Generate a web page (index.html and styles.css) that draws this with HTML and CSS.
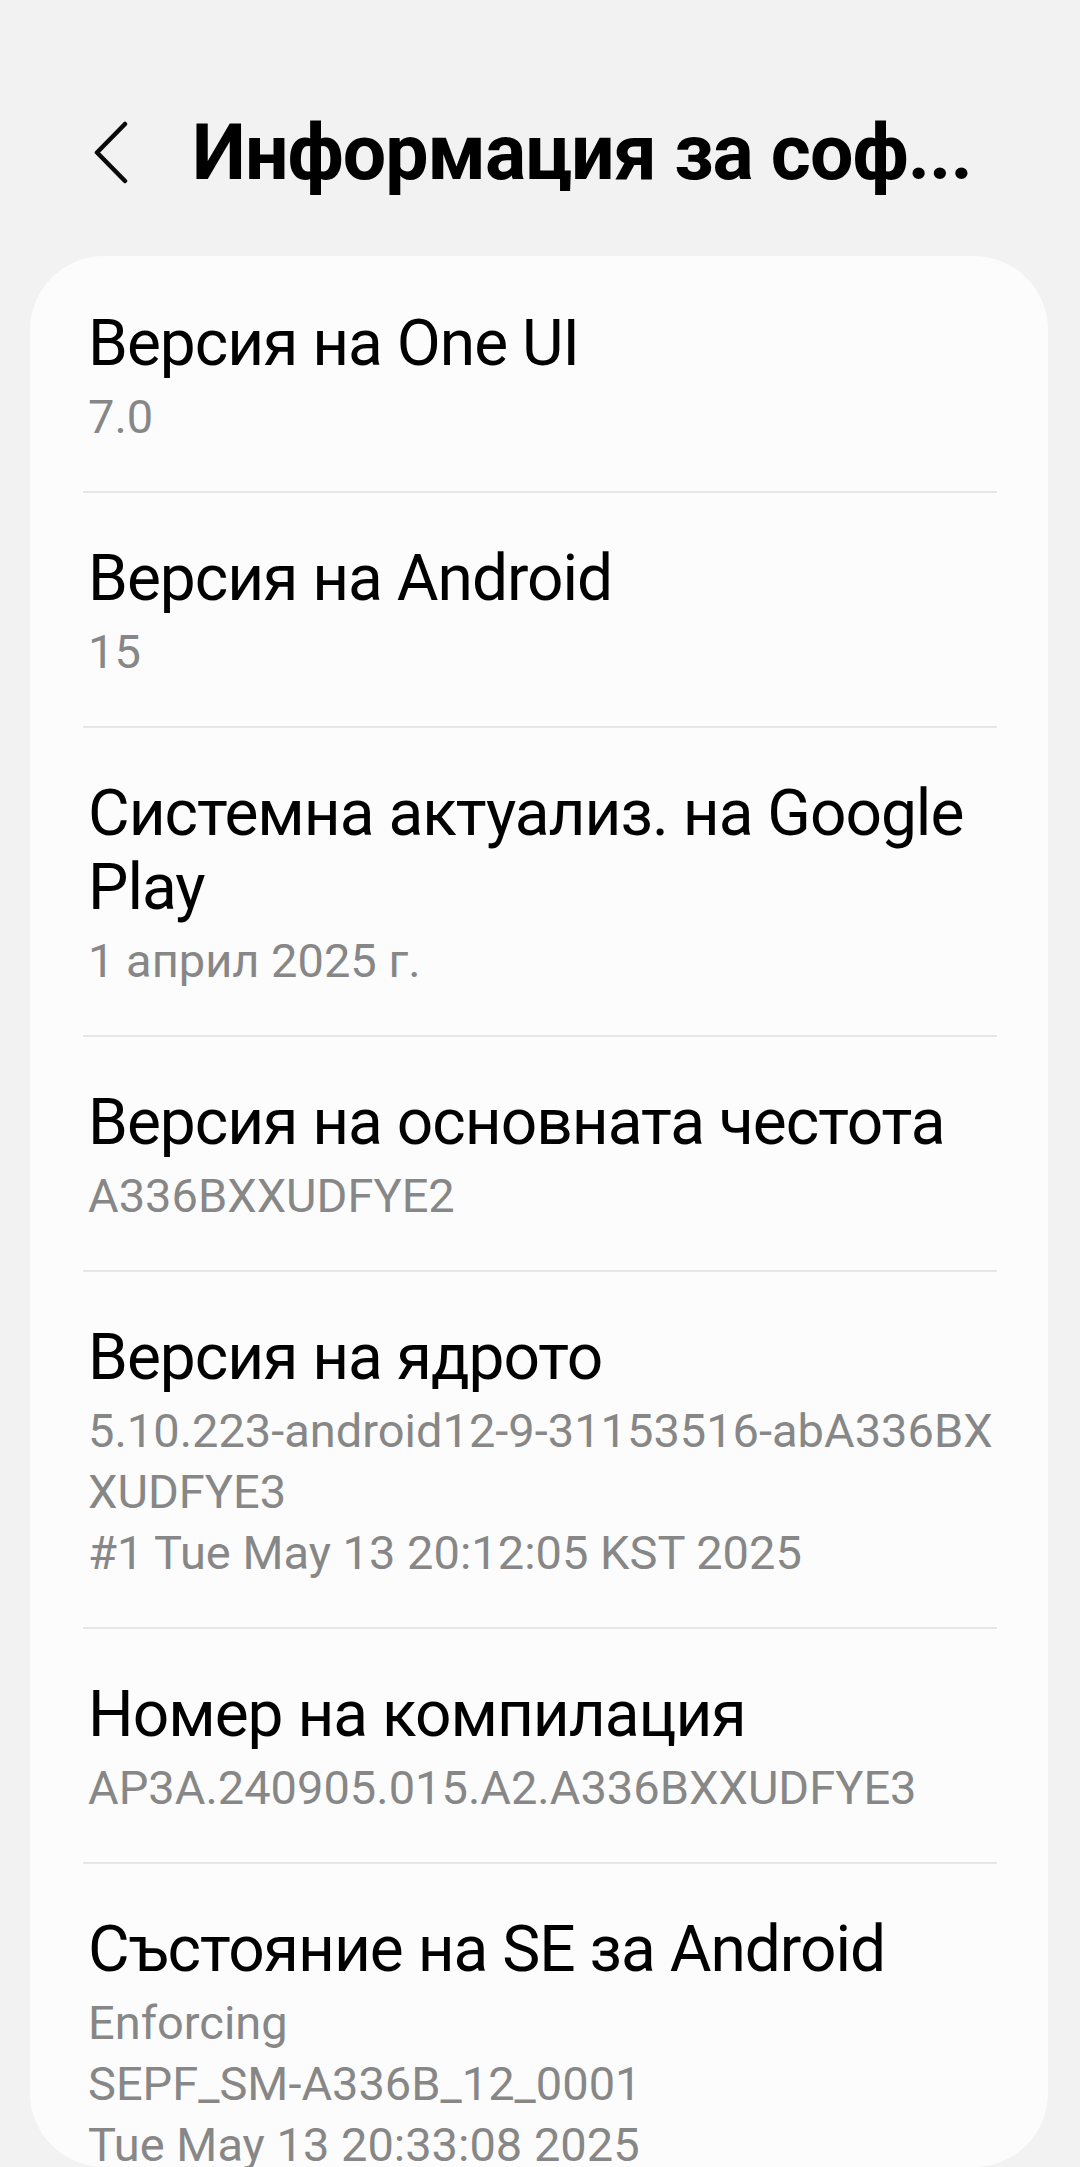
FILE: index.html
```html
<!DOCTYPE html>
<html lang="bg">
  <head>
    <meta charset="UTF-8" />
    <meta name="viewport" content="width=device-width, initial-scale=1.0" />
    <title>Информация за софтуера</title>
    <link rel="stylesheet" href="styles.css">
  </head>
  <body>
    <header class="app-bar">
      <button class="back" aria-label="Назад">
        <svg viewBox="0 0 40 64" width="40" height="64">
          <polyline points="33,3 5,31.5 33,60" fill="none" stroke="#0a0a0a" stroke-width="4.5" stroke-linecap="round" stroke-linejoin="round" />
        </svg>
      </button>
      <h1 class="app-title">Информация за соф...</h1>
    </header>

    <section class="card">
      <div class="info-item">
        <div class="label">Версия на One UI</div>
        <div class="value">7.0</div>
      </div>

      <div class="info-item">
        <div class="label">Версия на Android</div>
        <div class="value">15</div>
      </div>

      <div class="info-item">
        <div class="label">Системна актуализ. на Google Play</div>
        <div class="value">1 април 2025 г.</div>
      </div>

      <div class="info-item">
        <div class="label">Версия на основната честота</div>
        <div class="value">A336BXXUDFYE2</div>
      </div>

      <div class="info-item">
        <div class="label">Версия на ядрото</div>
        <div class="value">5.10.223-android12-9-31153516-abA336BX<br>XUDFYE3<br>#1 Tue May 13 20:12:05 KST 2025</div>
      </div>

      <div class="info-item">
        <div class="label">Номер на компилация</div>
        <div class="value">AP3A.240905.015.A2.A336BXXUDFYE3</div>
      </div>

      <div class="info-item">
        <div class="label">Състояние на SE за Android</div>
        <div class="value">Enforcing<br>SEPF_SM-A336B_12_0001<br>Tue May 13 20:33:08 2025</div>
      </div>
    </section>
  </body>
</html>
```

FILE: styles.css
```css
html,
body {
  margin: 0;
  padding: 0;
}

body {
  background: #f2f2f2;
  font-family: Roboto, "Noto Sans", sans-serif;
  color: #000;
  overflow: hidden;
}

.app-bar {
  display: flex;
  align-items: center;
  height: 256px;
  padding: 50px 60px 0 92px;
  box-sizing: border-box;
}

.back {
  display: flex;
  padding: 0;
  margin: 0 60px 0 0;
  border: none;
  background: none;
}

.app-title {
  margin: 0;
  font-size: 77px;
  font-weight: 700;
  letter-spacing: -1px;
  white-space: nowrap;
}

.card {
  margin: 0 32px 0 30px;
  padding: 0 51px 0 53px;
  height: 1911px;
  overflow: hidden;
  background: #fcfcfc;
  border-radius: 74px;
}

.info-item {
  padding: 49px 5px 44px;
  border-bottom: 2px solid #e6e6e6;
}

.info-item:first-child {
  padding-top: 51px;
}

.info-item:last-child {
  border-bottom: none;
}

.label {
  font-size: 64px;
  line-height: 74px;
  letter-spacing: -1px;
}

.value {
  margin-top: 5px;
  font-size: 47px;
  line-height: 61px;
  color: #878787;
  white-space: nowrap;
}
```
